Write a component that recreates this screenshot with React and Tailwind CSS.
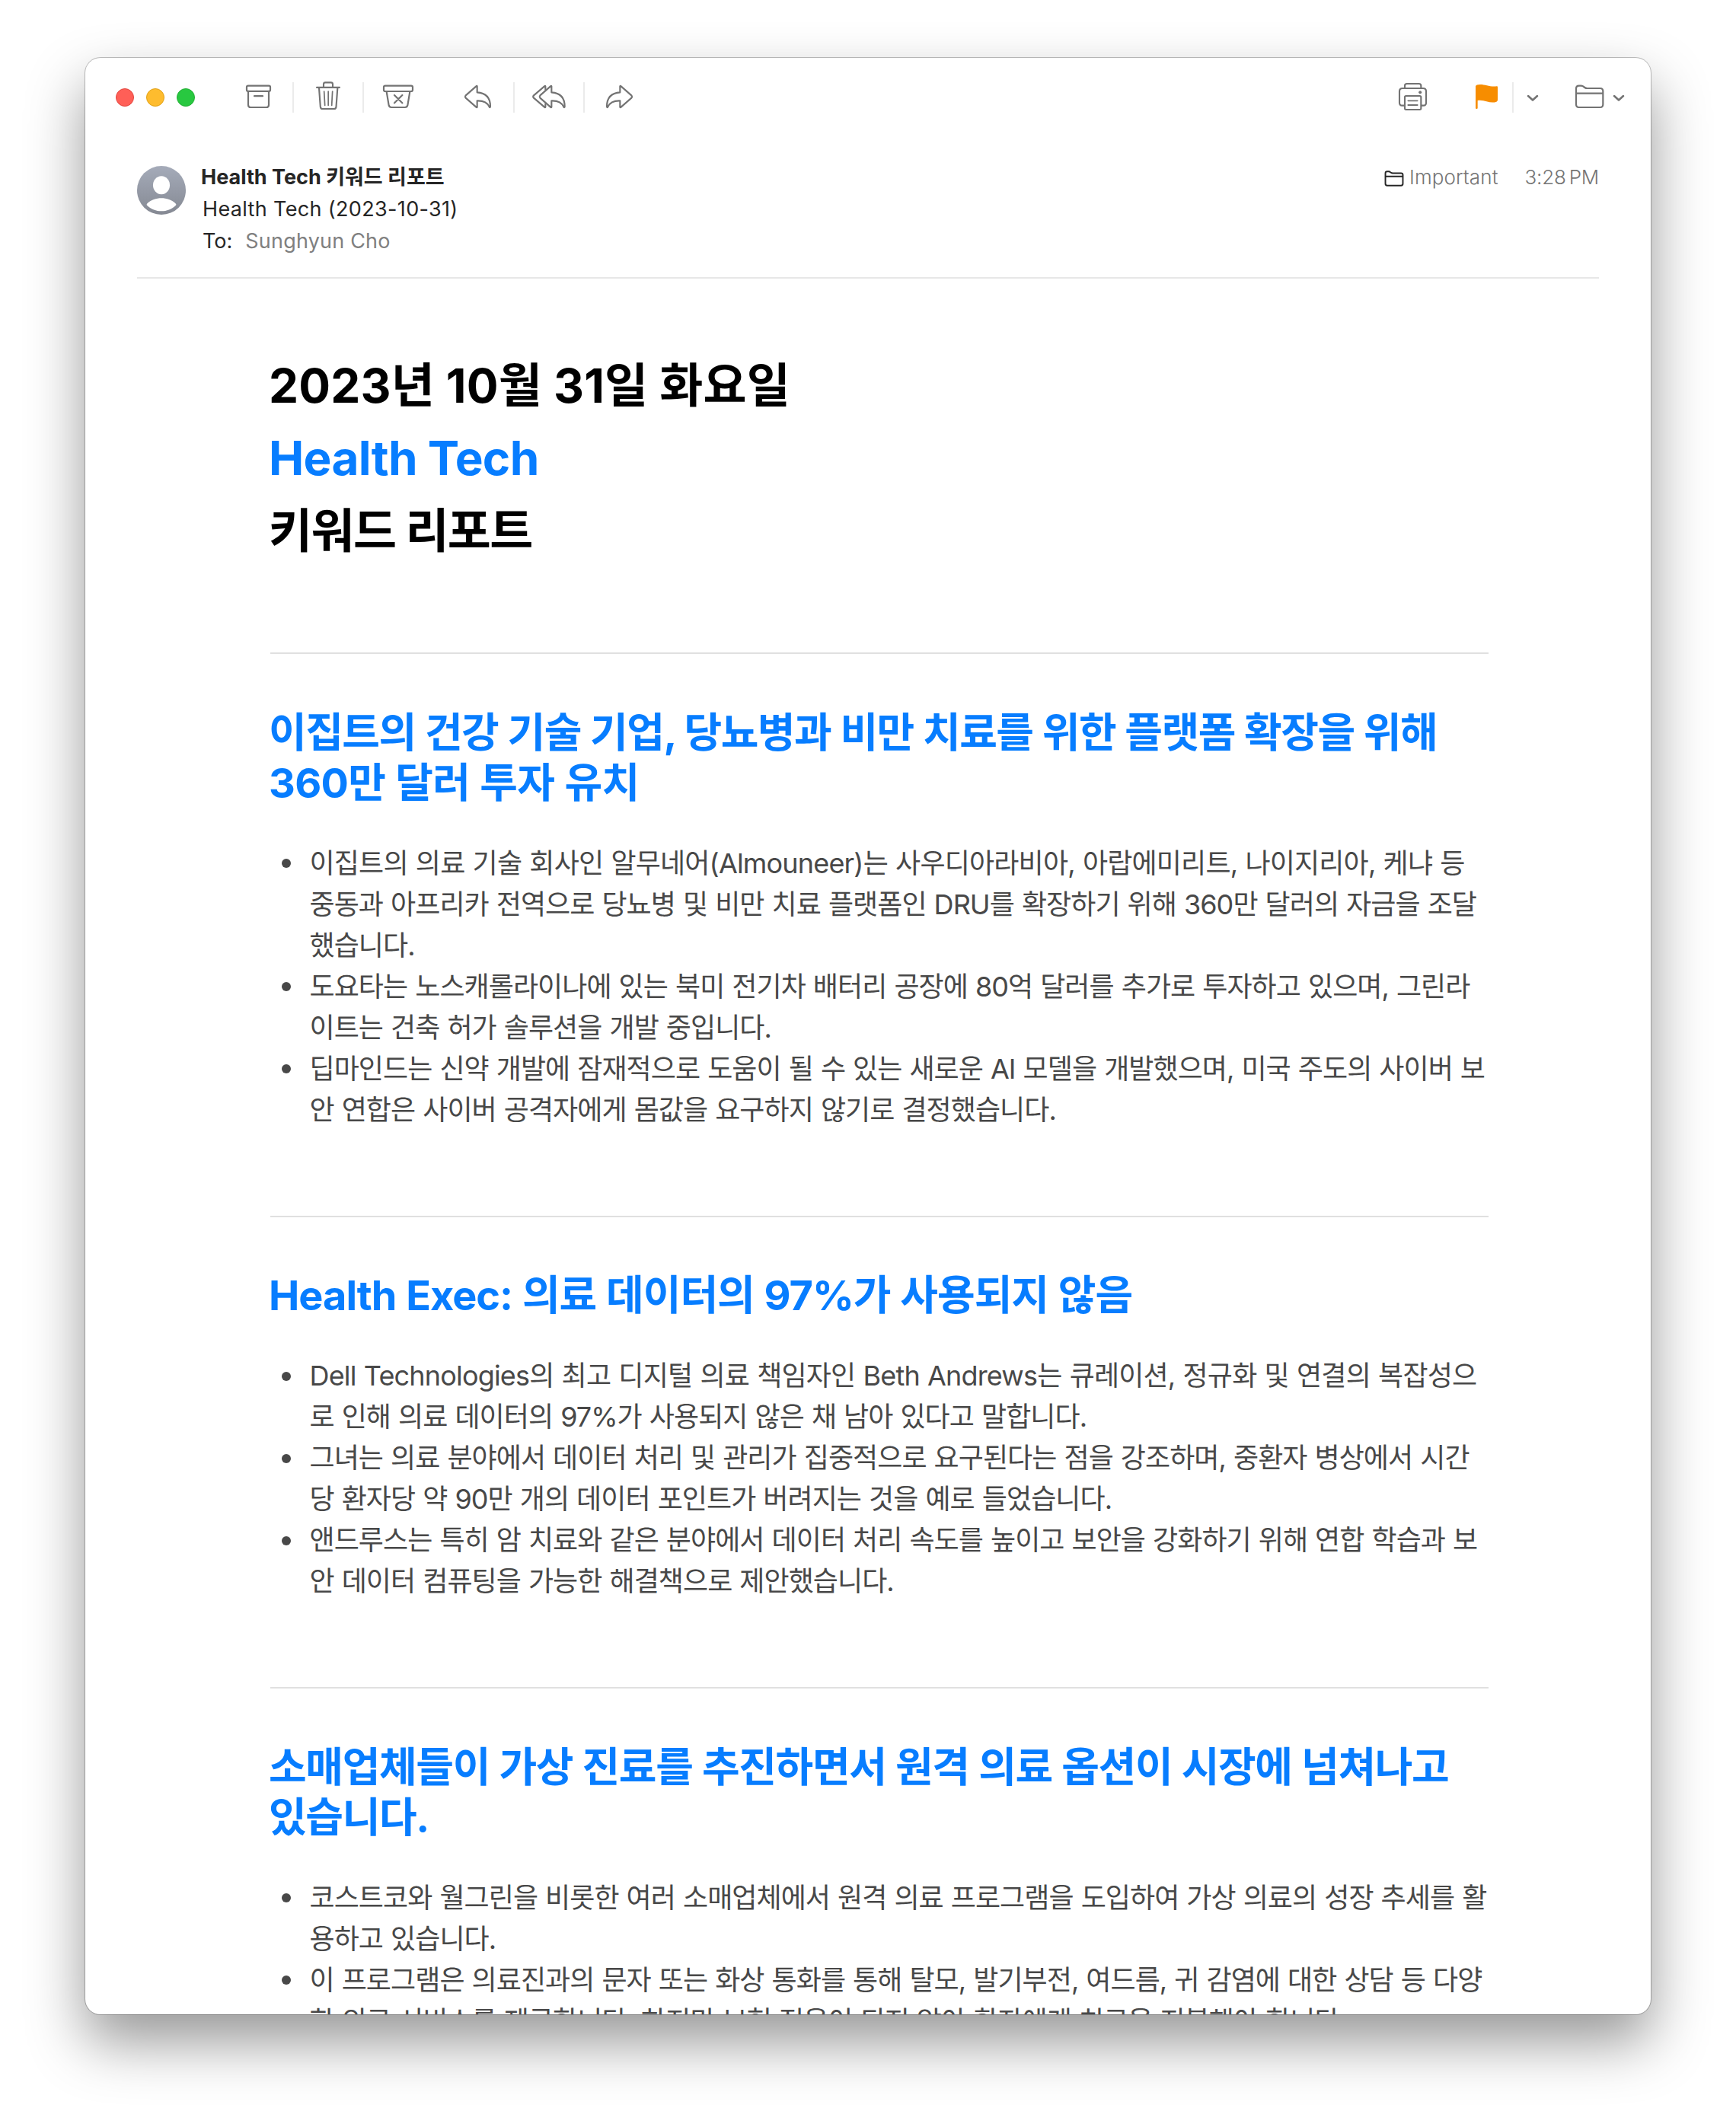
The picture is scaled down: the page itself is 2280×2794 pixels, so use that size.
const ICON = "h-12 shrink-0 fill-none stroke-[#737373] [stroke-linecap:round] [stroke-linejoin:round]";

function Separator({ className }) {
  return <div className={`h-10 w-0.5 shrink-0 bg-[#ebebeb] ${className}`} />;
}

function ArchiveIcon() {
  return (
    <svg viewBox="666 132 105 144" className={`ml-[66px] w-[35px] ${ICON}`} strokeWidth="6.6">
      <rect x="672" y="158" width="93" height="21.500" rx="5.500" />
      <path d="M678 180V233Q678 243 688 243H749Q759 243 759 233V180M702 198.500H735" />
    </svg>
  );
}

function TrashIcon() {
  return (
    <svg viewBox="942 132 102 144" className={`ml-7 w-[34px] ${ICON}`} strokeWidth="6.4">
      <path d="M948 164.500H1038M975 163V152Q975 145 982 145H1004Q1011 145 1011 152V163M957 166L962.500 241Q963 249 971 249H1016Q1024 249 1024.500 241L1030 166" />
      <path d="M977 180L980 235M993.500 180V235M1010 180L1007 235" strokeWidth="5.2" />
    </svg>
  );
}

function JunkIcon() {
  return (
    <svg viewBox="6 132 126 144" className={`ml-6 w-[42px] ${ICON}`} strokeWidth="6.6">
      <rect x="12" y="158" width="114" height="22" rx="6" />
      <path d="M23 181L32 235Q34 243 42 243H96Q104 243 106 235L115 181M54 195L85 226M85 195L54 226" />
    </svg>
  );
}

const REPLY_PATH =
  "M380 160Q379 157 376 160L335 196Q331 201 335 206L376 242Q379 245 380 242V217C408 216 421 225 428 241Q431 246 432 240C432 206 414 186 380 184Z";

function ReplyIcon() {
  return (
    <svg viewBox="327 132 114 144" className={`ml-[65px] w-[38px] ${ICON}`} strokeWidth="6.4">
      <path d={REPLY_PATH} />
    </svg>
  );
}

function ReplyAllIcon() {
  return (
    <svg viewBox="594 132 138 144" className={`ml-[22px] w-[46px] ${ICON}`} strokeWidth="6.4">
      <path d={REPLY_PATH} transform="translate(293 0)" />
      <path d="M649 173V160Q648 157 645 160L603 196Q598 201 603 206L645 242Q648 245 649 242V230" />
    </svg>
  );
}

function ForwardIcon() {
  return (
    <svg viewBox="882 132 114 144" className={`ml-[26px] w-[38px] ${ICON}`} strokeWidth="6.4">
      <path d={REPLY_PATH} transform="translate(1323 0) scale(-1 1)" />
    </svg>
  );
}

function PrinterIcon() {
  return (
    <svg viewBox="228 132 117 144" className={`ml-auto w-[39px] ${ICON}`} strokeWidth="6.4">
      <path d="M255 166V158Q255 150 263 150H311Q319 150 319 158V166M253 236H245Q234 236 234 225V180Q234 168 246 168H327Q339 168 339 180V225Q339 236 328 236H321" />
      <rect x="255" y="198" width="64" height="54" rx="5" />
      <path d="M268 217H305M268 234H305" strokeWidth="5.4" />
      <circle cx="315.500" cy="184" r="6" className="fill-[#737373]" stroke="none" />
    </svg>
  );
}

function FlagIcon() {
  return (
    <svg viewBox="531 132 93 144" className="ml-[62px] h-12 w-[31px] shrink-0 fill-[#f78d00]">
      <path d="M534 160Q536 153 552 153C574 153 590 163 617 160Q621 159 621 164V213Q621 219 616 221C592 231 570 211 542 216V246Q542 249 538 249Q534 249 534 246Z" />
    </svg>
  );
}

function Chevron({ className }) {
  return (
    <svg viewBox="735 132 48 144" className={`w-4 ${ICON} ${className}`} strokeWidth="7.6">
      <path d="M741 198L759 214.500L777 198" />
    </svg>
  );
}

function FolderShape() {
  return (
    <path d="M930 169Q930 158 941 158H950Q956 158 960 162L964 165Q968 168 974 168H1025Q1036 168 1036 179V232Q1036 243 1025 243H941Q930 243 930 232ZM930 188H1036" />
  );
}

function Toolbar() {
  return (
    <div className="flex h-[104px] items-center pr-[34px] pl-10">
      <div className="flex gap-4">
        <span className="size-6 rounded-full border border-[#e2463f] bg-[#ff5f57]" />
        <span className="size-6 rounded-full border border-[#e1a116] bg-[#febc2e]" />
        <span className="size-6 rounded-full border border-[#24ae35] bg-[#28c840]" />
      </div>
      <ArchiveIcon />
      <Separator className="ml-[27px]" />
      <TrashIcon />
      <Separator className="ml-7" />
      <JunkIcon />
      <ReplyIcon />
      <Separator className="ml-[27px]" />
      <ReplyAllIcon />
      <Separator className="ml-[22px]" />
      <ForwardIcon />
      <PrinterIcon />
      <FlagIcon />
      <Separator className="ml-[18px]" />
      <Chevron className="ml-[17px]" />
      <svg viewBox="924 132 117 144" className={`ml-[47px] w-[39px] ${ICON}`} strokeWidth="6.6">
        <FolderShape />
      </svg>
      <Chevron className="ml-[11px]" />
    </div>
  );
}

function Avatar() {
  return (
    <svg viewBox="0 0 192 192" className="mt-[6px] size-16 shrink-0">
      <defs>
        <linearGradient id="avatar" x1="0" y1="0" x2="0" y2="1">
          <stop offset="0" stopColor="#a5abb9" />
          <stop offset="1" stopColor="#858993" />
        </linearGradient>
      </defs>
      <circle cx="96" cy="96" r="96" fill="url(#avatar)" />
      <ellipse cx="96" cy="76" rx="33" ry="36" fill="#fff" />
      <path d="M39 149C55 134 76 127 96 127S137 134 153 149Q156 153 152 156C136 171 117 178 96 178S56 171 40 156Q36 153 39 149Z" fill="#fff" />
    </svg>
  );
}

function MessageHeader() {
  return (
    <header className="mx-[68px] mt-8 flex h-[154px] border-b-2 border-[#e7e7e7] text-[27px] leading-[42px] text-[#262626]">
      <Avatar />
      <div className="ml-5">
        <div className="font-bold">Health Tech 키워드 리포트</div>
        <div className="ml-0.5 tracking-[0.35px]">Health Tech (2023-10-31)</div>
        <div className="ml-0.5 flex">
          To:<span className="ml-[17px] tracking-[0.2px] text-[#808080]">Sunghyun Cho</span>
        </div>
      </div>
      <div className="ml-auto flex h-[42px] items-center text-[26px] font-light text-[#757575]">
        <svg
          viewBox="924 152 118 97"
          className="mt-0.5 h-[21px] w-[26px] fill-none stroke-[#262626] [stroke-linejoin:round]"
          strokeWidth="9"
        >
          <FolderShape />
        </svg>
        <span className="ml-[7px] tracking-[0.1px]">Important</span>
        <span className="ml-[35px] tracking-[-0.2px]">3:28</span>
        <span className="ml-1 tracking-[-0.2px]">PM</span>
      </div>
    </header>
  );
}

const SECTIONS = [
  {
    title: [
      { text: "이집트의 건강 기술 기업, 당뇨병과 비만 치료를 위한 플랫폼 확장을 위해", tracking: "tracking-[-1.52px]" },
      { text: "360만 달러 투자 유치", tracking: "tracking-[-0.7px]" },
    ],
    items: [
      [
        "이집트의 의료 기술 회사인 알무네어(Almouneer)는 사우디아라비아, 아랍에미리트, 나이지리아, 케냐 등",
        "중동과 아프리카 전역으로 당뇨병 및 비만 치료 플랫폼인 DRU를 확장하기 위해 360만 달러의 자금을 조달",
        "했습니다.",
      ],
      [
        "도요타는 노스캐롤라이나에 있는 북미 전기차 배터리 공장에 80억 달러를 추가로 투자하고 있으며, 그린라",
        "이트는 건축 허가 솔루션을 개발 중입니다.",
      ],
      [
        "딥마인드는 신약 개발에 잠재적으로 도움이 될 수 있는 새로운 AI 모델을 개발했으며, 미국 주도의 사이버 보",
        "안 연합은 사이버 공격자에게 몸값을 요구하지 않기로 결정했습니다.",
      ],
    ],
  },
  {
    title: [{ text: "Health Exec: 의료 데이터의 97%가 사용되지 않음", tracking: "tracking-[-1px]" }],
    items: [
      [
        "Dell Technologies의 최고 디지털 의료 책임자인 Beth Andrews는 큐레이션, 정규화 및 연결의 복잡성으",
        "로 인해 의료 데이터의 97%가 사용되지 않은 채 남아 있다고 말합니다.",
      ],
      [
        "그녀는 의료 분야에서 데이터 처리 및 관리가 집중적으로 요구된다는 점을 강조하며, 중환자 병상에서 시간",
        "당 환자당 약 90만 개의 데이터 포인트가 버려지는 것을 예로 들었습니다.",
      ],
      [
        "앤드루스는 특히 암 치료와 같은 분야에서 데이터 처리 속도를 높이고 보안을 강화하기 위해 연합 학습과 보",
        "안 데이터 컴퓨팅을 가능한 해결책으로 제안했습니다.",
      ],
    ],
  },
  {
    title: [
      { text: "소매업체들이 가상 진료를 추진하면서 원격 의료 옵션이 시장에 넘쳐나고", tracking: "tracking-[-1.35px]" },
      { text: "있습니다.", tracking: "tracking-[-1.35px]" },
    ],
    items: [
      [
        "코스트코와 월그린을 비롯한 여러 소매업체에서 원격 의료 프로그램을 도입하여 가상 의료의 성장 추세를 활",
        "용하고 있습니다.",
      ],
      [
        "이 프로그램은 의료진과의 문자 또는 화상 통화를 통해 탈모, 발기부전, 여드름, 귀 감염에 대한 상담 등 다양",
        "한 의료 서비스를 제공합니다. 하지만 보험 적용이 되지 않아 환자에게 치료을 지불해야 합니다.",
      ],
    ],
  },
];

// Lines that contain Latin words are set slightly looser than pure Hangul lines.
const hasLatinWord = (line) => /[A-Za-z]{4}/.test(line);

function Section({ title, items }) {
  return (
    <section className="mb-[112px] border-t-2 border-[#e0e0e0] pt-[70.5px]">
      <h2 className="-ml-0.5 text-[54px] leading-[66px] font-bold whitespace-nowrap text-[#077dff] [word-spacing:1px]">
        {title.map((line) => (
          <span key={line.text} className={`block ${line.tracking}`}>
            {line.text}
          </span>
        ))}
      </h2>
      <ul className="mt-[45px] text-[36px] leading-[54px] whitespace-nowrap text-[#484848] [word-spacing:0.85px]">
        {items.map((lines) => (
          <li key={lines[0]} className="flex">
            <span className="mt-[21.5px] mr-[24.5px] ml-[15px] size-3 shrink-0 rounded-full bg-[#484848]" />
            <div>
              {lines.map((line) => (
                <div key={line} className={hasLatinWord(line) ? "tracking-[-0.82px]" : "tracking-[-0.95px]"}>
                  {line}
                </div>
              ))}
            </div>
          </li>
        ))}
      </ul>
    </section>
  );
}

export default function App() {
  return (
    <div className="h-[2794px] w-[2280px] overflow-hidden bg-white px-28 pt-[76px] font-['Inter','Noto_Sans_CJK_KR',sans-serif]">
      <main className="h-[2570px] overflow-hidden rounded-[20px] bg-white shadow-[0_0_0_1px_rgba(0,0,0,0.24),0_36px_76px_rgba(0,0,0,0.41)]">
        <Toolbar />
        <MessageHeader />
        <article className="mt-[93px] mr-[213px] ml-[243px]">
          <h1 className="mb-[110px] -ml-0.5 text-[62px] leading-[95px] font-bold whitespace-nowrap text-black">
            <div className="tracking-[0.2px]">2023년 10월 31일 화요일</div>
            <div className="tracking-[-0.7px] text-[#077dff]">Health Tech</div>
            <div className="leading-[98px] tracking-[-1.6px]">키워드 리포트</div>
          </h1>
          {SECTIONS.map((section) => (
            <Section key={section.title[0].text} {...section} />
          ))}
        </article>
      </main>
    </div>
  );
}
